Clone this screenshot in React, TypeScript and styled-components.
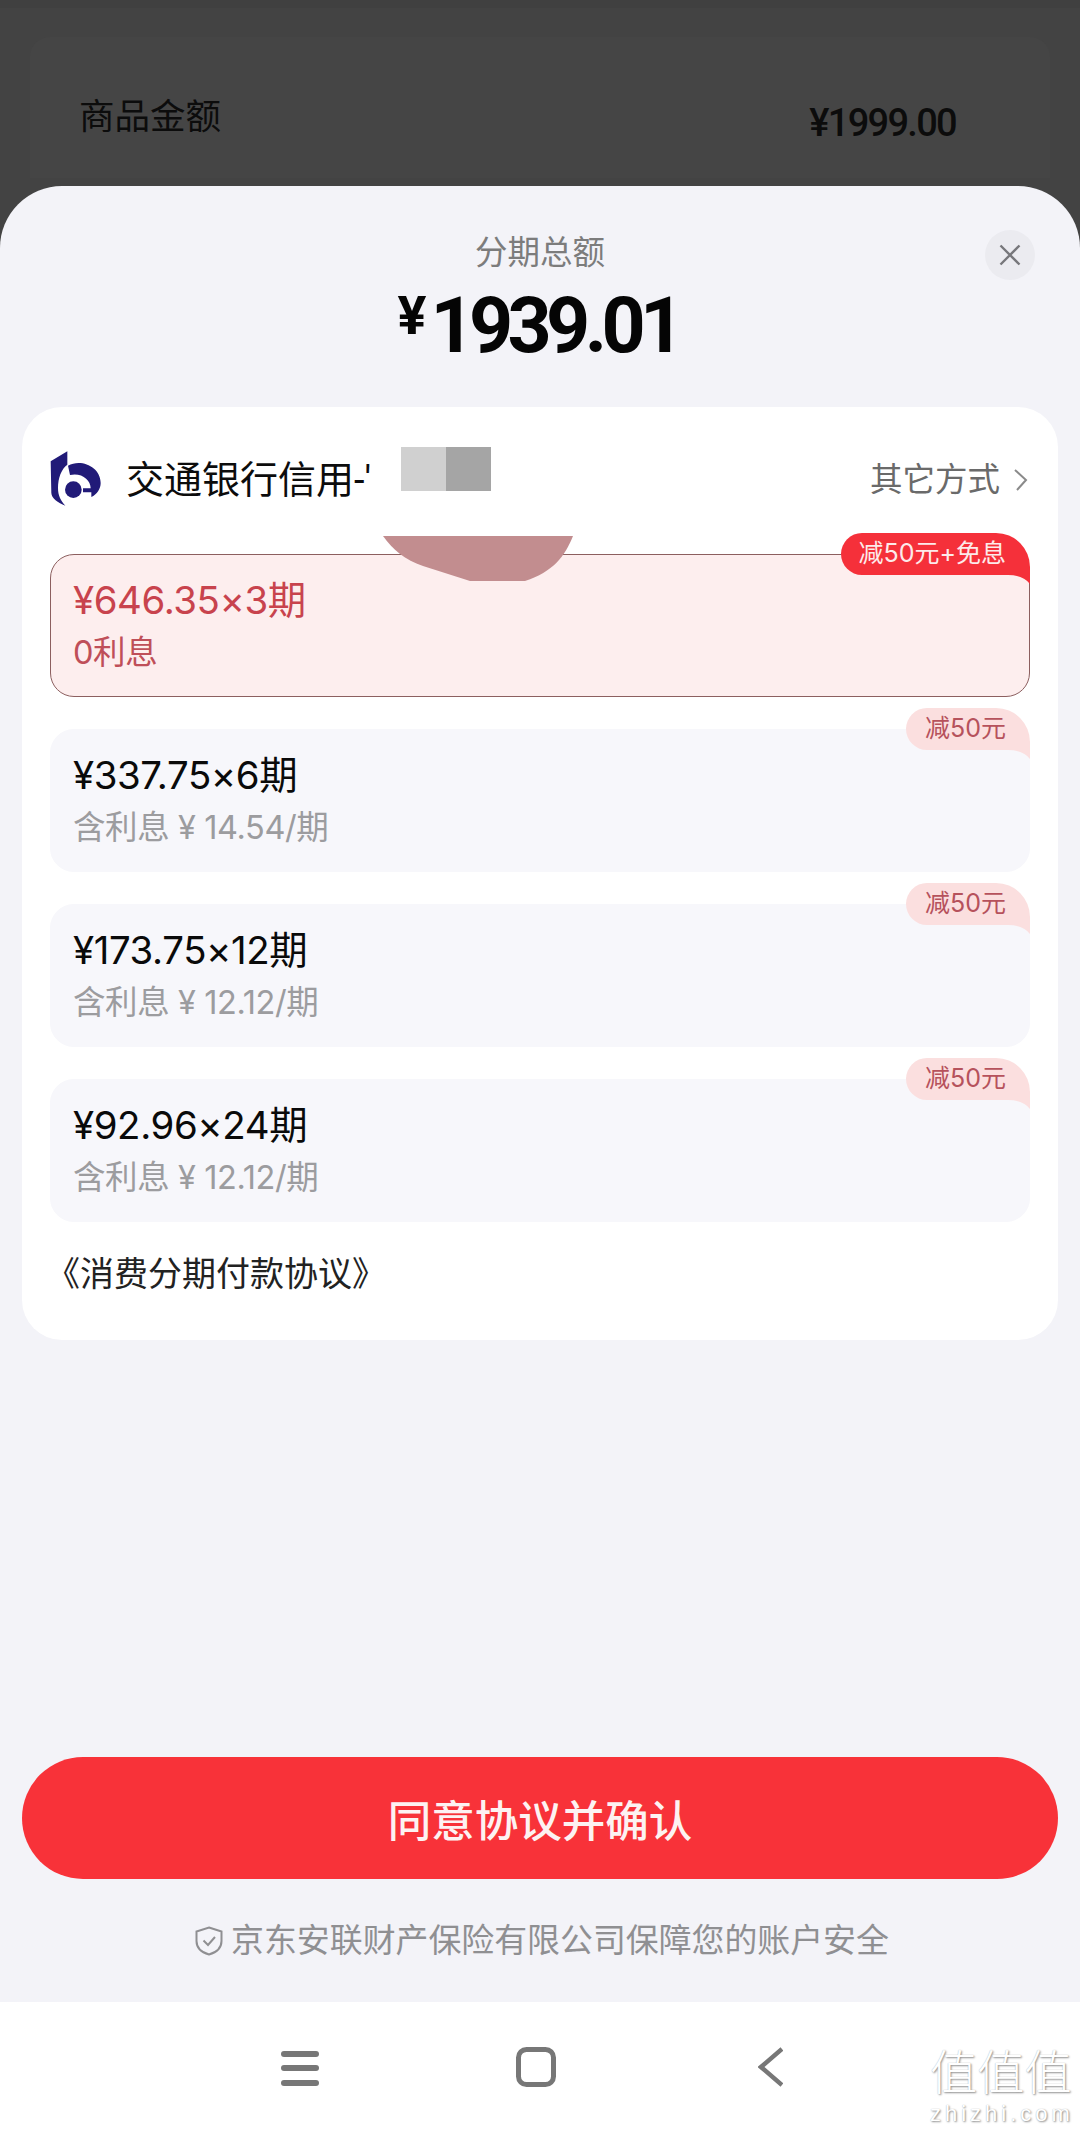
import React from "react";
import styled, { createGlobalStyle } from "styled-components";

const Global = createGlobalStyle`
  html, body { margin: 0; padding: 0; background: #434343; }
  * { box-sizing: border-box; }
`;
const sans = `Roboto, "Noto Sans CJK SC", sans-serif`;

const Page = styled.div`
  position: relative; width: 1080px; height: 2132px; overflow: hidden;
  display: flex; flex-direction: column; background: #434343; font-family: ${sans};
`;
const Backdrop = styled.div`
  height: 186px; padding-top: 37px; padding-inline: 30px; flex: none;
  border-top: 8px solid #404040; margin-top: 0;
`;
const BackdropCard = styled.div`
  height: 141px; margin-top: -8px; background: #454545; border-radius: 20px 20px 0 0;
  padding: 60px 94px 0 49px; display: flex; justify-content: space-between; color: #0c0c0c;
`;
const BackLabel = styled.span`
  font-size: 35.5px; line-height: 40px; margin-top: 0;
`;
const BackPrice = styled.span`
  font-size: 38px; line-height: 44px; letter-spacing: -1.7px; margin-top: 4px; font-weight: 500;
`;
const Sheet = styled.main`
  flex: 1; min-height: 0; background: #f3f3f8; border-radius: 62px 62px 0 0;
  display: flex; flex-direction: column; padding: 0 22px; position: relative;
`;
const Title = styled.div`
  text-align: center; margin-top: 47px; font-size: 32.5px; line-height: 40px; color: #7c7c7c;
`;
const Total = styled.div`
  display: flex; justify-content: center; align-items: flex-start; height: 60px; margin-top: 23px; color: #050505;
  font-weight: 700; padding-right: 4px;
`;
const TotalSign = styled.span`
  font-size: 54px; line-height: 44px; margin-top: -2px; margin-right: 4px;
`;
const TotalValue = styled.span`
  font-size: 77px; line-height: 60px; letter-spacing: -5.6px;
`;
const CloseButton = styled.button`
  position: absolute; top: 44px; right: 45px; width: 50px; height: 50px; padding: 0; border: 0; border-radius: 50%;
  background: #ebebf0; display: flex; align-items: center; justify-content: center;
`;
const Card = styled.section`
  position: relative; margin-top: 51px; height: 933px; background: #fff; border-radius: 40px;
  padding: 0 28px;
`;
const CardHead = styled.div`
  height: 147px; display: flex; align-items: flex-start; justify-content: space-between;
`;
const Bank = styled.div`
  display: flex; align-items: flex-start; padding-top: 41px;
`;
const BankName = styled.span`
  font-size: 38px; line-height: 46px; color: #0c0c0c; margin: 9px 0 0 23px; width: 252px; white-space: nowrap; overflow: hidden;
`;
const Mask = styled.div`
  display: flex; margin: -1px 0 0 23px;
`;
const MaskCell = styled.i<{ $c: string }>`
  display: block; width: 45px; height: 44px; background: ${(p) => p.$c};
`;
const Other = styled.div`
  display: flex; align-items: center; gap: 13px; margin: 52px 2px 0 0; color: #6a6a6a; font-size: 32.5px; line-height: 42px;
`;
const Blob = styled.svg`
  position: absolute; left: 361px; top: 129px; width: 190px; height: 45px; z-index: 2;
`;
const Plans = styled.div`
  display: flex; flex-direction: column; gap: 32px;
`;
const Plan = styled.div<{ $on?: boolean }>`
  position: relative; height: 143px; border-radius: 24px; padding: 22px 22px 0;
  background: ${(p) => (p.$on ? "#fdeeee" : "#f7f7fb")};
  border: 1px solid ${(p) => (p.$on ? "#8c5f5f" : "#f7f7fb")};
`;
const PlanMain = styled.div<{ $on?: boolean }>`
  font-family: Inter, "Noto Sans CJK SC", sans-serif;
  font-size: 38.4px; line-height: 46px; color: ${(p) => (p.$on ? "#c8434d" : "#0a0a0a")};
  letter-spacing: -0.4px;
`;
const PlanSub = styled.div<{ $on?: boolean }>`
  font-family: Inter, "Noto Sans CJK SC", sans-serif;
  font-size: 32.5px; line-height: 40px; margin-top: 10px; color: ${(p) => (p.$on ? "#bf4f59" : "#9c9c9f")};
  letter-spacing: -0.4px;
`;
const Badge = styled.div<{ $on?: boolean }>`
  position: absolute; right: -1px; top: -22px; height: 42px; padding: 0 24px 0 ${(p) => (p.$on ? 17 : 19)}px;
  border-radius: 21px 34px 0 21px; font-family: Inter, "Noto Sans CJK SC", sans-serif; font-size: 25px; line-height: 41px;
  background: ${(p) => (p.$on ? "#f5303a" : "#fbdfdf")}; color: ${(p) => (p.$on ? "#fdeaea" : "#b6525c")};
  &::after {
    content: ""; position: absolute; right: 0; top: 100%; width: 22px; height: 9px;
    background: inherit; clip-path: path("M0 0 H22 V9 Q15 0 0 0 Z");
  }
`;
const Agreement = styled.div`
  margin: 31px 0 0 -4px; font-size: 34px; line-height: 42px; color: #222;
`;
const Confirm = styled.button`
  margin-top: auto; height: 122px; width: 100%; flex: none; border: 0; border-radius: 61px; background: #f83239; color: #fdf2f2;
  font-family: ${sans}; font-size: 43.5px; font-weight: 500; padding: 0;
`;
const Assure = styled.div`
  display: flex; align-items: center; justify-content: center; gap: 8px; height: 123px; padding: 0 0 0 4px;
  color: #8f8f92; font-size: 32.9px; line-height: 42px;
`;
const NavBar = styled.nav`
  flex: none; height: 130px; background: #fff; display: flex; align-items: flex-start; padding-top: 45px; padding-left: 281px;
`;
const NavIcon = styled.svg<{ $w: number; $gap: number }>`
  flex: none; width: ${(p) => p.$w}px; margin-right: ${(p) => p.$gap}px; height: 40px; display: block;
`;
const Watermark = styled.div`
  position: absolute; left: 930px; top: 2046px; width: 144px; color: #fff;
  text-shadow: 1px 1px 2px #8f8f8f, 0 0 1px #b5b5b5;
`;
const MarkGlyphs = styled.div`
  font-size: 47.3px; line-height: 56px; white-space: nowrap; font-weight: 300;
`;
const MarkDomain = styled.div`
  font-family: "Liberation Sans", sans-serif; font-size: 22px; line-height: 24px; letter-spacing: 4px; white-space: nowrap;
`;

const BankLogo = () => (
  <svg width="55" height="60" viewBox="60 55 165 180" style={{ flex: "none", marginLeft: -2 }}>
    <g fill="#211a78">
      <path d="M68 95 L118 65 V105 C100 118 90 145 90 175 C90 197 98 213 112 228 C90 220 70 205 70 190 Z" />
      <path d="M120 108 C160 86 218 112 218 160 C218 178 207 194 190 202 V188 H165 V176 H188 C188 150 160 128 126 136 Z" />
      <circle cx="136" cy="180" r="25" />
    </g>
  </svg>
);

const plans = [
  { main: "¥646.35×3期", sub: "0利息", badge: "减50元+免息", on: true },
  { main: "¥337.75×6期", sub: "含利息 ¥ 14.54/期", badge: "减50元" },
  { main: "¥173.75×12期", sub: "含利息 ¥ 12.12/期", badge: "减50元" },
  { main: "¥92.96×24期", sub: "含利息 ¥ 12.12/期", badge: "减50元" },
];

export default function App() {
  return (
    <Page>
      <Global />
      <Backdrop>
        <BackdropCard>
          <BackLabel>商品金额</BackLabel>
          <BackPrice>¥1999.00</BackPrice>
        </BackdropCard>
      </Backdrop>
      <Sheet>
        <Title>分期总额</Title>
        <Total>
          <TotalSign>¥</TotalSign>
          <TotalValue>1939.01</TotalValue>
        </Total>
        <CloseButton aria-label="关闭">
          <svg width="24" height="24" viewBox="0 0 24 24" fill="none" stroke="#77777b" strokeWidth="2.4">
            <path d="M2.5 2.5 L21.5 21.5 M21.5 2.5 L2.5 21.5" />
          </svg>
        </CloseButton>
        <Card>
          <CardHead>
            <Bank>
              <BankLogo />
              <BankName>交通银行信用-'</BankName>
              <Mask>
                <MaskCell $c="#d0d0d0" />
                <MaskCell $c="#a5a5a5" />
              </Mask>
            </Bank>
            <Other>
              其它方式
              <svg width="15" height="22" viewBox="0 0 15 22" fill="none" stroke="#8a8a8a" strokeWidth="2">
                <path d="M2 1 L13 11 L4 21" />
              </svg>
            </Other>
          </CardHead>
          <Blob viewBox="0 0 190 45">
            <path d="M0 0 H190 C182 20 170 36 142 45 H87 L40 30 C22 24 10 14 0 0 Z" fill="#c28d8f" />
          </Blob>
          <Plans>
            {plans.map((p) => (
              <Plan key={p.main} $on={p.on}>
                <Badge $on={p.on}>{p.badge}</Badge>
                <PlanMain $on={p.on}>{p.main}</PlanMain>
                <PlanSub $on={p.on}>{p.sub}</PlanSub>
              </Plan>
            ))}
          </Plans>
          <Agreement>《消费分期付款协议》</Agreement>
        </Card>
        <Confirm>同意协议并确认</Confirm>
        <Assure>
          <svg width="28" height="30" viewBox="0 0 28 30" fill="none" stroke="#8f8f92" strokeWidth="2">
            <path d="M14 1.5 L26.5 5.5 V15 C26.5 22 21 26.5 14 28.5 C7 26.5 1.5 22 1.5 15 V5.5 Z" />
            <path d="M8.5 14.5 L13 19 L20 11" />
          </svg>
          京东安联财产保险有限公司保障您的账户安全
        </Assure>
      </Sheet>
      <NavBar>
        <NavIcon $w={38} $gap={197} viewBox="0 0 38 40" fill="#777">
          <rect x="0" y="4" width="38" height="6" rx="3" />
          <rect x="0" y="18" width="38" height="6" rx="3" />
          <rect x="0" y="33" width="38" height="6" rx="3" />
        </NavIcon>
        <NavIcon $w={40} $gap={202} viewBox="0 0 40 40" fill="none" stroke="#777" strokeWidth="5">
          <rect x="2.5" y="2.5" width="35" height="35" rx="8" />
        </NavIcon>
        <NavIcon $w={25} $gap={0} viewBox="0 0 25 40" fill="none" stroke="#777" strokeWidth="4.5">
          <path d="M24 2 L3 20 L24 38" />
        </NavIcon>
      </NavBar>
      <Watermark>
        <MarkGlyphs>值值值</MarkGlyphs>
        <MarkDomain>zhizhi.com</MarkDomain>
      </Watermark>
    </Page>
  );
}
